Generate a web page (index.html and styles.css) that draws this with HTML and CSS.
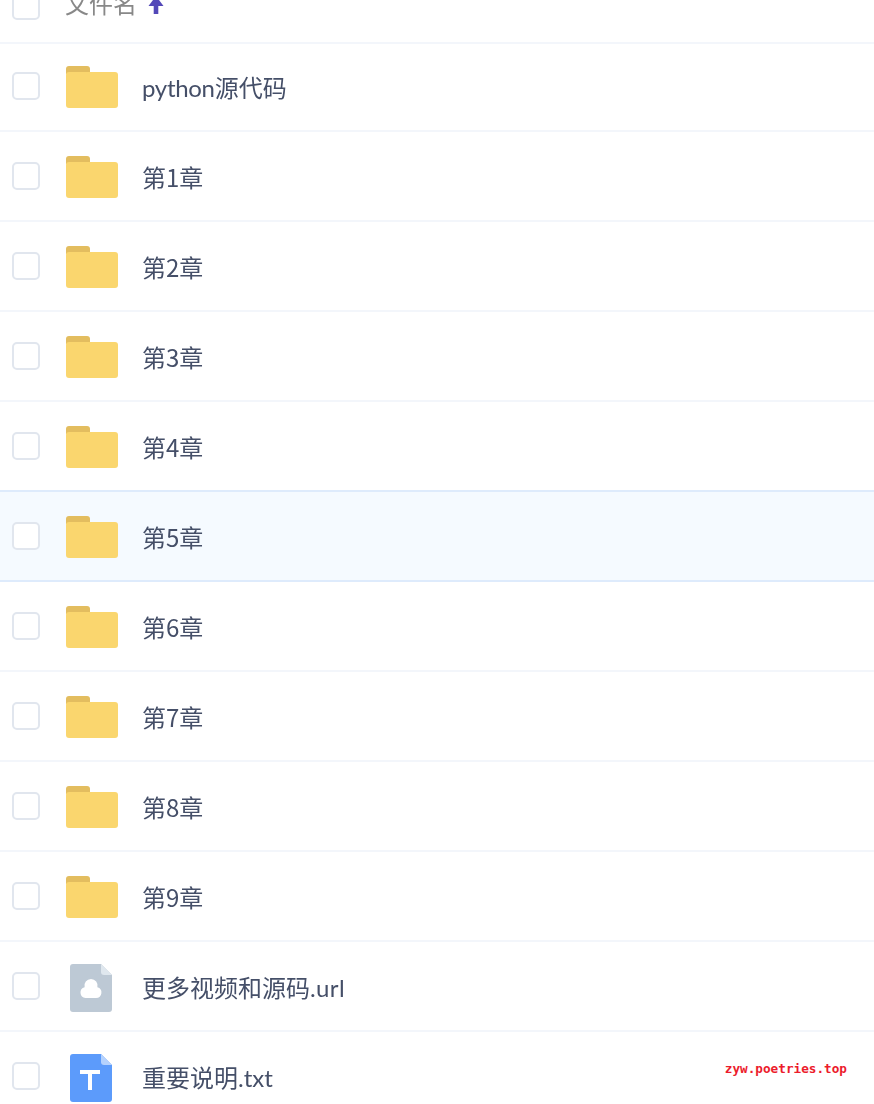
FILE: index.html
```html
<!DOCTYPE html>
<html lang="zh-CN">
<head>
  <meta charset="UTF-8" />
  <title>文件列表</title>
  <link rel="stylesheet" href="styles.css">
</head>
<body>

<svg class="defs" width="0" height="0">
  <symbol id="folder" viewBox="0 0 52 42">
    <path d="M3 0h18a3 3 0 0 1 3 3v5H0V3a3 3 0 0 1 3-3z" fill="#e3bd5f"/>
    <path d="M3 6h46a3 3 0 0 1 3 3v30a3 3 0 0 1-3 3H3a3 3 0 0 1-3-3V9a3 3 0 0 1 3-3z" fill="#fad66e"/>
  </symbol>
  <symbol id="file-url" viewBox="0 0 52 48">
    <path d="M7 0h28l11 11v34a3 3 0 0 1-3 3H7a3 3 0 0 1-3-3V3a3 3 0 0 1 3-3z" fill="#bdc9d5"/>
    <path d="M35 0l11 11h-8a3 3 0 0 1-3-3z" fill="#dfe7ee"/>
    <path d="M19.500 34a5.500 5.500 0 0 1-.9-10.800A6.600 6.600 0 1 1 31.400 23.200a5.500 5.500 0 0 1-1.400 10.800z" fill="#fff"/>
  </symbol>
  <symbol id="file-txt" viewBox="0 0 52 48">
    <path d="M7 0h28l11 11v34a3 3 0 0 1-3 3H7a3 3 0 0 1-3-3V3a3 3 0 0 1 3-3z" fill="#5c9bfb"/>
    <path d="M35 0l11 11h-8a3 3 0 0 1-3-3z" fill="#b5d2fd"/>
    <path d="M14 16h20v4h-8v16h-4V20h-8z" fill="#fff"/>
  </symbol>
</svg>

<div class="file-table">
  <div class="row head-row">
    <span class="check"></span>
    <span class="head-name">文件名</span>
    <svg class="sort-arrow" width="16" height="20" viewBox="0 0 16 20">
      <path d="M8 1L.5 11h5.200v8h4.600v-8h5.200z" fill="#5348b8"/>
    </svg>
  </div>

  <div class="row first-row">
    <span class="check"></span>
    <svg class="file-icon folder-icon"><use href="#folder"/></svg>
    <span class="name"><span class="latin latin-tight">python</span>源代码</span>
  </div>
  <div class="row">
    <span class="check"></span>
    <svg class="file-icon folder-icon"><use href="#folder"/></svg>
    <span class="name">第1章</span>
  </div>
  <div class="row">
    <span class="check"></span>
    <svg class="file-icon folder-icon"><use href="#folder"/></svg>
    <span class="name">第2章</span>
  </div>
  <div class="row">
    <span class="check"></span>
    <svg class="file-icon folder-icon"><use href="#folder"/></svg>
    <span class="name">第3章</span>
  </div>
  <div class="row before-hover">
    <span class="check"></span>
    <svg class="file-icon folder-icon"><use href="#folder"/></svg>
    <span class="name">第4章</span>
  </div>
  <div class="row hovered">
    <span class="check"></span>
    <svg class="file-icon folder-icon"><use href="#folder"/></svg>
    <span class="name">第5章</span>
  </div>
  <div class="row">
    <span class="check"></span>
    <svg class="file-icon folder-icon"><use href="#folder"/></svg>
    <span class="name">第6章</span>
  </div>
  <div class="row">
    <span class="check"></span>
    <svg class="file-icon folder-icon"><use href="#folder"/></svg>
    <span class="name">第7章</span>
  </div>
  <div class="row">
    <span class="check"></span>
    <svg class="file-icon folder-icon"><use href="#folder"/></svg>
    <span class="name">第8章</span>
  </div>
  <div class="row">
    <span class="check"></span>
    <svg class="file-icon folder-icon"><use href="#folder"/></svg>
    <span class="name">第9章</span>
  </div>
  <div class="row">
    <span class="check"></span>
    <svg class="file-icon doc-icon"><use href="#file-url"/></svg>
    <span class="name">更多视频和源码<span class="latin latin-wide">.url</span></span>
  </div>
  <div class="row">
    <span class="check"></span>
    <svg class="file-icon doc-icon"><use href="#file-txt"/></svg>
    <span class="name">重要说明<span class="latin">.txt</span></span>
  </div>
</div>

<div class="watermark">zyw.poetries.top</div>

</body>
</html>
```

FILE: styles.css
```css
* {
  margin: 0;
  padding: 0;
  box-sizing: border-box;
}

html, body {
  height: 100%;
  overflow: hidden;
}

body {
  position: relative;
  background: #fff;
  font-family: "Noto Sans CJK SC", sans-serif;
  font-size: 24px;
  color: #454f68;
}

.defs {
  position: absolute;
}

/* the shot is slightly soft, it was scaled up */
.file-table {
  margin-top: -46px;
  filter: blur(0.4px);
}

.row {
  display: flex;
  align-items: center;
  height: 90px;
  padding: 2px 0 0 12px;
  border-bottom: 2px solid #f3f6fb;
}

.head-row {
  height: 90px;
  padding-top: 18px;
}

.first-row {
  height: 88px;
  padding-top: 0;
}

.before-hover {
  border-bottom-color: #deebfc;
}

.hovered {
  background: #f5faff;
  border-bottom-color: #deebfc;
}

.check {
  flex: none;
  width: 28px;
  height: 28px;
  margin-top: -2px;
  margin-right: 26px;
  background: #fff;
  border: 2px solid #e1e6ee;
  border-radius: 5px;
}

.file-icon {
  flex: none;
  width: 52px;
  margin-right: 24px;
}

.folder-icon {
  height: 42px;
}

.doc-icon {
  height: 48px;
  margin-top: 2px;
}

.name {
  margin-top: -2px;
}

.latin {
  font-family: "Lato", sans-serif;
}

.latin-tight {
  letter-spacing: -0.3px;
}

.latin-wide {
  letter-spacing: 0.4px;
}

.head-name {
  color: #888;
  margin-left: -1px;
  margin-right: 11px;
  margin-bottom: 10px;
}

.sort-arrow {
  margin-top: -4px;
}

.watermark {
  position: absolute;
  right: 27px;
  top: 1061px;
  font-family: "DejaVu Sans Mono", monospace;
  font-size: 12.7px;
  font-weight: bold;
  color: #ec1c2c;
}
```
